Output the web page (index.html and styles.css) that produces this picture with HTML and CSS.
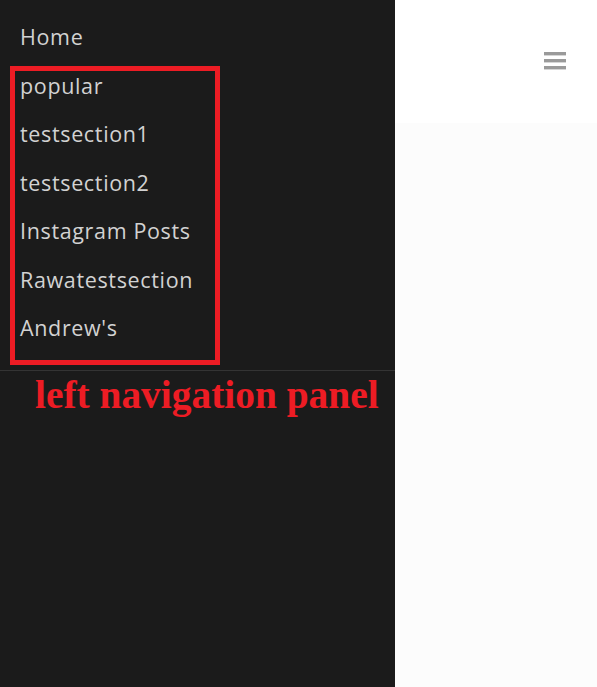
FILE: index.html
```html
<!DOCTYPE html>
<html>
<head>
<meta charset="utf-8">
<link rel="stylesheet" href="styles.css">
</head>
<body>
<div class="page">
  <aside class="sidebar">
    <ul class="nav">
      <li>Home</li>
      <li>popular</li>
      <li>testsection1</li>
      <li>testsection2</li>
      <li>Instagram Posts</li>
      <li>Rawatestsection</li>
      <li>Andrew's</li>
    </ul>
    <div class="divider"></div>
    <div class="highlight"></div>
    <div class="annotation">left navigation panel</div>
  </aside>
  <main class="main">
    <header class="topbar">
      <svg class="menu" width="22" height="18" viewBox="0 0 22 18">
        <rect x="0" y="0" width="22" height="3.4" fill="#9a9a9a"/>
        <rect x="0" y="7" width="22" height="3.4" fill="#9a9a9a"/>
        <rect x="0" y="14" width="22" height="3.4" fill="#9a9a9a"/>
      </svg>
    </header>
    <section class="content"></section>
  </main>
</div>
</body>
</html>
```
FILE: styles.css
```css
html, body {
  margin: 0;
  padding: 0;
  height: 100%;
}
body {
  font-family: "Open Sans", Roboto, sans-serif;
}
.page {
  display: flex;
  height: 687px;
}
.sidebar {
  position: relative;
  width: 395px;
  flex: none;
  background: #1b1b1b;
}
.nav {
  list-style: none;
  margin: 0;
  padding: 13px 0 17px 20px;
}
.nav li {
  font-size: 21.5px;
  letter-spacing: 0.65px;
  line-height: 48.5px;
  height: 48.5px;
  color: #d2d2d2;
}
.divider {
  height: 1px;
  background: #343434;
}
.highlight {
  position: absolute;
  left: 10px;
  top: 66px;
  width: 200px;
  height: 289px;
  border: 5px solid #ed1c24;
}
.annotation {
  position: absolute;
  left: 35px;
  top: 372px;
  font-family: "Liberation Serif", "Times New Roman", serif;
  font-weight: bold;
  font-size: 39.4px;
  color: #ed1c24;
  white-space: nowrap;
}
.main {
  flex: 1;
  display: flex;
  flex-direction: column;
  background: #fcfcfc;
}
.topbar {
  height: 123px;
  background: #ffffff;
  display: flex;
  justify-content: flex-end;
  align-items: flex-start;
  padding: 52px 31px 0 0;
  box-sizing: border-box;
}
.menu {
  display: block;
}
.content {
  flex: 1;
}
```
